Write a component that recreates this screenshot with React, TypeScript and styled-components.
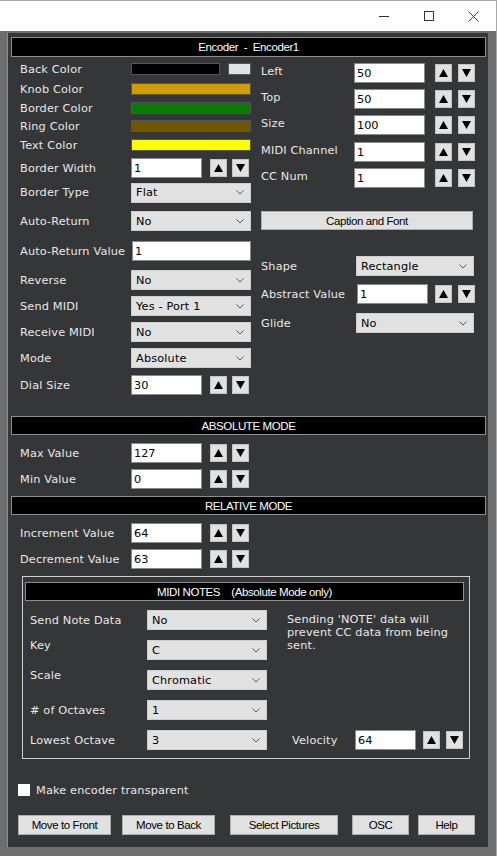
import React from 'react';
import styled, { createGlobalStyle } from 'styled-components';

const GlobalStyle = createGlobalStyle`
  html, body {
    margin: 0;
    padding: 0;
    background: #6e6e6e;
  }
  body {
    width: 497px;
    height: 856px;
    overflow: hidden;
  }
  * {
    box-sizing: border-box;
  }
`;

const uiFont = `"DejaVu Sans", Verdana, sans-serif`;
const sysFont = `"Liberation Sans", Arial, sans-serif`;

const Window = styled.div`
  width: 497px;
  height: 856px;
  display: flex;
  flex-direction: column;
  border-top: 1px solid #a9a9a9;
  border-right: 1px solid #a9a9a9;
  background: #6e6e6e;
`;

const TitleBar = styled.div`
  height: 30px;
  flex-shrink: 0;
  background: #ffffff;
  display: flex;
  justify-content: flex-end;
`;

const TitleButton = styled.div`
  width: 45px;
  height: 30px;
  display: flex;
  align-items: center;
  justify-content: center;
`;

const Frame = styled.div`
  flex: 1;
  display: flex;
  flex-direction: column;
  padding: 2px 8px 9px 7px;
`;

const Panel = styled.div`
  flex: 1;
  background: #353638;
  border-left: 1px solid #8d8d8d;
  padding: 4px 2px 12px 3px;
  display: flex;
  flex-direction: column;
`;

const SectionHeader = styled.div<{ $h?: number; $mt?: number }>`
  height: ${(p) => p.$h ?? 19}px;
  margin-top: ${(p) => p.$mt ?? 0}px;
  flex-shrink: 0;
  background: #000000;
  border: 1px solid #8c8c8c;
  color: #ffffff;
  font-family: ${sysFont};
  font-size: 11.5px;
  letter-spacing: -0.4px;
  white-space: pre;
  display: flex;
  align-items: center;
  justify-content: center;
`;

const Columns = styled.div`
  display: grid;
  grid-template-columns: 232px 214px;
  column-gap: 9px;
  margin: 6px 0 0 9px;
  align-items: start;
`;

const Column = styled.div`
  display: flex;
  flex-direction: column;
`;

const Block = styled.div<{ $ml?: number }>`
  display: flex;
  flex-direction: column;
  margin-left: ${(p) => p.$ml ?? 9}px;
`;

const Row = styled.div<{ $h?: number; $mt?: number }>`
  display: flex;
  align-items: center;
  height: ${(p) => p.$h ?? 20}px;
  margin-top: ${(p) => p.$mt ?? 0}px;
  flex-shrink: 0;
`;

const Label = styled.span<{ $w: number; $shift?: number }>`
  width: ${(p) => p.$w}px;
  flex-shrink: 0;
  color: #e8e8e8;
  font-family: ${uiFont};
  font-size: 11.3px;
  letter-spacing: 0.15px;
  white-space: nowrap;
  transform: translateY(${(p) => p.$shift ?? 0}px);
`;

const Swatch = styled.div<{ $w: number; $c: string; $ml?: number }>`
  width: ${(p) => p.$w}px;
  height: 12px;
  margin-left: ${(p) => p.$ml ?? 0}px;
  background: ${(p) => p.$c};
  border: 1px solid #55565a;
`;

const TextBox = styled.div<{ $w: number }>`
  width: ${(p) => p.$w}px;
  height: 20px;
  flex-shrink: 0;
  background: #ffffff;
  border: 1px solid #8a8a8a;
  padding: 0 2px;
  display: flex;
  align-items: center;
  color: #000000;
  font-family: ${uiFont};
  font-size: 11.3px;
`;

const SpinButton = styled.div<{ $ml: number }>`
  width: 17px;
  height: 18px;
  margin-left: ${(p) => p.$ml}px;
  flex-shrink: 0;
  background: #e1e1e1;
  border: 1px solid #c4c4c4;
  display: flex;
  align-items: center;
  justify-content: center;
`;

const Combo = styled.div<{ $w: number }>`
  width: ${(p) => p.$w}px;
  height: 20px;
  flex-shrink: 0;
  background: #e1e1e1;
  border: 1px solid #cdcdcd;
  padding: 0 6px 0 4px;
  display: flex;
  align-items: center;
  justify-content: space-between;
  color: #000000;
  font-family: ${uiFont};
  font-size: 11.3px;
  letter-spacing: 0.15px;
`;

const PushButton = styled.div<{ $w: number; $ml?: number; $h?: number }>`
  width: ${(p) => p.$w}px;
  height: ${(p) => p.$h ?? 20}px;
  margin-left: ${(p) => p.$ml ?? 0}px;
  flex-shrink: 0;
  background: #e1e1e1;
  border: 1px solid #adadad;
  color: #000000;
  font-family: ${sysFont};
  font-size: 11.5px;
  letter-spacing: -0.4px;
  display: flex;
  align-items: center;
  justify-content: center;
`;

const NotesBox = styled.div`
  margin: 7px 0 0 11px;
  width: 448px;
  border: 1px solid #cfcfcf;
  padding: 5px 5px 8px 2px;
  display: flex;
  flex-direction: column;
`;

const NotesBody = styled.div`
  display: grid;
  grid-template-columns: 237px 1fr;
  column-gap: 20px;
  margin-left: 5px;
`;

const NotesSide = styled.div`
  display: flex;
  flex-direction: column;
  justify-content: space-between;
  padding-top: 12px;
`;

const NoteText = styled.p`
  margin: 0;
  width: 170px;
  color: #e8e8e8;
  font-family: ${uiFont};
  font-size: 11.3px;
  letter-spacing: 0.15px;
  line-height: 13px;
`;

const VelocityRow = styled(Row)`
  padding-left: 5px;
`;

const CheckRow = styled.div`
  display: flex;
  align-items: center;
  gap: 6px;
  height: 12px;
  margin: 25px 0 0 7px;
`;

const CheckBox = styled.div`
  width: 12px;
  height: 12px;
  background: #ffffff;
`;

const ButtonRow = styled.div`
  display: flex;
  margin: 19px 0 0 7px;
`;

const Up = () => (
  <svg width="9" height="8" viewBox="0 0 9 8">
    <polygon points="4.5,0 9,8 0,8" fill="#000" />
  </svg>
);

const Down = () => (
  <svg width="9" height="8" viewBox="0 0 9 8">
    <polygon points="0,0 9,0 4.5,8" fill="#000" />
  </svg>
);

const Chevron = () => (
  <svg width="8" height="5" viewBox="0 0 8 5">
    <polyline points="0.5,0.5 4,4 7.5,0.5" fill="none" stroke="#5a5a5a" strokeWidth="1" />
  </svg>
);

const Spinner: React.FC<{ value: string; w?: number; gap?: number; gap2?: number }> = ({
  value,
  w = 71,
  gap = 8,
  gap2 = 5,
}) => (
  <>
    <TextBox $w={w}>{value}</TextBox>
    <SpinButton $ml={gap}>
      <Up />
    </SpinButton>
    <SpinButton $ml={gap2}>
      <Down />
    </SpinButton>
  </>
);

const Select: React.FC<{ value: string; w?: number }> = ({ value, w = 120 }) => (
  <Combo $w={w}>
    <span>{value}</span>
    <Chevron />
  </Combo>
);

const colorRows = [
  { label: 'Back Color', color: '#000000', w: 89, mt: 0 },
  { label: 'Knob Color', color: '#d19c00', w: 120, mt: 8 },
  { label: 'Border Color', color: '#077a07', w: 120, mt: 7 },
  { label: 'Ring Color', color: '#715600', w: 120, mt: 6 },
  { label: 'Text Color', color: '#ffff00', w: 120, mt: 7 },
];

const leftSelects = [
  { label: 'Reverse', value: 'No', mt: 9 },
  { label: 'Send MIDI', value: 'Yes - Port 1', mt: 6 },
  { label: 'Receive MIDI', value: 'No', mt: 6 },
  { label: 'Mode', value: 'Absolute', mt: 6 },
];

const rightSpinners = [
  { label: 'Left', value: '50', mt: 0 },
  { label: 'Top', value: '50', mt: 6 },
  { label: 'Size', value: '100', mt: 6 },
  { label: 'MIDI Channel', value: '1', mt: 7 },
  { label: 'CC Num', value: '1', mt: 6 },
];

const noteRows = [
  { label: 'Send Note Data', value: 'No', mt: 9, shift: 0 },
  { label: 'Key', value: 'C', mt: 10, shift: -5 },
  { label: 'Scale', value: 'Chromatic', mt: 10, shift: -5 },
  { label: '# of Octaves', value: '1', mt: 10, shift: 0 },
  { label: 'Lowest Octave', value: '3', mt: 10, shift: 0 },
];

const bottomButtons = [
  { text: 'Move to Front', w: 93, ml: 0 },
  { text: 'Move to Back', w: 93, ml: 11 },
  { text: 'Select Pictures', w: 108, ml: 15 },
  { text: 'OSC', w: 57, ml: 14 },
  { text: 'Help', w: 57, ml: 9 },
];

export default function App() {
  return (
    <>
      <GlobalStyle />
      <Window>
        <TitleBar>
          <TitleButton>
            <svg width="10" height="10" viewBox="0 0 10 10">
              <line x1="0" y1="5.5" x2="10" y2="5.5" stroke="#333" strokeWidth="1" />
            </svg>
          </TitleButton>
          <TitleButton>
            <svg width="10" height="10" viewBox="0 0 10 10">
              <rect x="0.5" y="0.5" width="9" height="9" fill="none" stroke="#333" strokeWidth="1" />
            </svg>
          </TitleButton>
          <TitleButton>
            <svg width="11" height="11" viewBox="0 0 11 11">
              <path d="M0.5 0.5 L10.5 10.5 M10.5 0.5 L0.5 10.5" stroke="#333" strokeWidth="1" />
            </svg>
          </TitleButton>
        </TitleBar>

        <Frame>
          <Panel>
            <SectionHeader $h={20}>{'Encoder  -  Encoder1'}</SectionHeader>

            <Columns>
              <Column>
                {colorRows.map((r, i) => (
                  <Row key={r.label} $h={12} $mt={r.mt}>
                    <Label $w={111}>{r.label}</Label>
                    <Swatch $w={r.w} $c={r.color} />
                    {i === 0 && <Swatch $w={23} $c="#e1e1e1" $ml={8} />}
                  </Row>
                ))}
                <Row $mt={7}>
                  <Label $w={111}>Border Width</Label>
                  <Spinner value="1" />
                </Row>
                <Row $h={21} $mt={4}>
                  <Label $w={111}>Border Type</Label>
                  <Select value="Flat" />
                </Row>
                <Row $mt={8}>
                  <Label $w={111}>Auto-Return</Label>
                  <Select value="No" />
                </Row>
                <Row $mt={10}>
                  <Label $w={112}>Auto-Return Value</Label>
                  <TextBox $w={119}>1</TextBox>
                </Row>
                {leftSelects.map((r) => (
                  <Row key={r.label} $mt={r.mt}>
                    <Label $w={111}>{r.label}</Label>
                    <Select value={r.value} />
                  </Row>
                ))}
                <Row $mt={7}>
                  <Label $w={111}>Dial Size</Label>
                  <Spinner value="30" />
                </Row>
              </Column>

              <Column>
                {rightSpinners.map((r) => (
                  <Row key={r.label} $mt={r.mt}>
                    <Label $w={93} $shift={-2}>
                      {r.label}
                    </Label>
                    <Spinner value={r.value} gap={10} gap2={6} />
                  </Row>
                ))}
                <Row $h={19} $mt={23}>
                  <PushButton $w={212} $h={19}>
                    Caption and Font
                  </PushButton>
                </Row>
                <Row $mt={26}>
                  <Label $w={95}>Shape</Label>
                  <Select value="Rectangle" w={118} />
                </Row>
                <Row $mt={8}>
                  <Label $w={96}>Abstract Value</Label>
                  <Spinner value="1" gap={7} gap2={6} />
                </Row>
                <Row $mt={9}>
                  <Label $w={95}>Glide</Label>
                  <Select value="No" w={118} />
                </Row>
              </Column>
            </Columns>

            <SectionHeader $mt={21}>ABSOLUTE MODE</SectionHeader>
            <Block>
              <Row $mt={8}>
                <Label $w={111}>Max Value</Label>
                <Spinner value="127" />
              </Row>
              <Row $mt={6}>
                <Label $w={111}>Min Value</Label>
                <Spinner value="0" />
              </Row>
            </Block>

            <SectionHeader $mt={7}>RELATIVE MODE</SectionHeader>
            <Block>
              <Row $mt={8}>
                <Label $w={111}>Increment Value</Label>
                <Spinner value="64" />
              </Row>
              <Row $mt={6}>
                <Label $w={111}>Decrement Value</Label>
                <Spinner value="63" />
              </Row>
            </Block>

            <NotesBox>
              <SectionHeader>{'MIDI NOTES    (Absolute Mode only)'}</SectionHeader>
              <NotesBody>
                <Column>
                  {noteRows.map((r) => (
                    <Row key={r.label} $mt={r.mt}>
                      <Label $w={117} $shift={r.shift}>
                        {r.label}
                      </Label>
                      <Select value={r.value} />
                    </Row>
                  ))}
                </Column>
                <NotesSide>
                  <NoteText>Sending 'NOTE' data will prevent CC data from being sent.</NoteText>
                  <VelocityRow>
                    <Label $w={63}>Velocity</Label>
                    <Spinner value="64" w={61} gap={7} gap2={6} />
                  </VelocityRow>
                </NotesSide>
              </NotesBody>
            </NotesBox>

            <CheckRow>
              <CheckBox />
              <Label $w={200}>Make encoder transparent</Label>
            </CheckRow>

            <ButtonRow>
              {bottomButtons.map((b) => (
                <PushButton key={b.text} $w={b.w} $ml={b.ml}>
                  {b.text}
                </PushButton>
              ))}
            </ButtonRow>
          </Panel>
        </Frame>
      </Window>
    </>
  );
}
